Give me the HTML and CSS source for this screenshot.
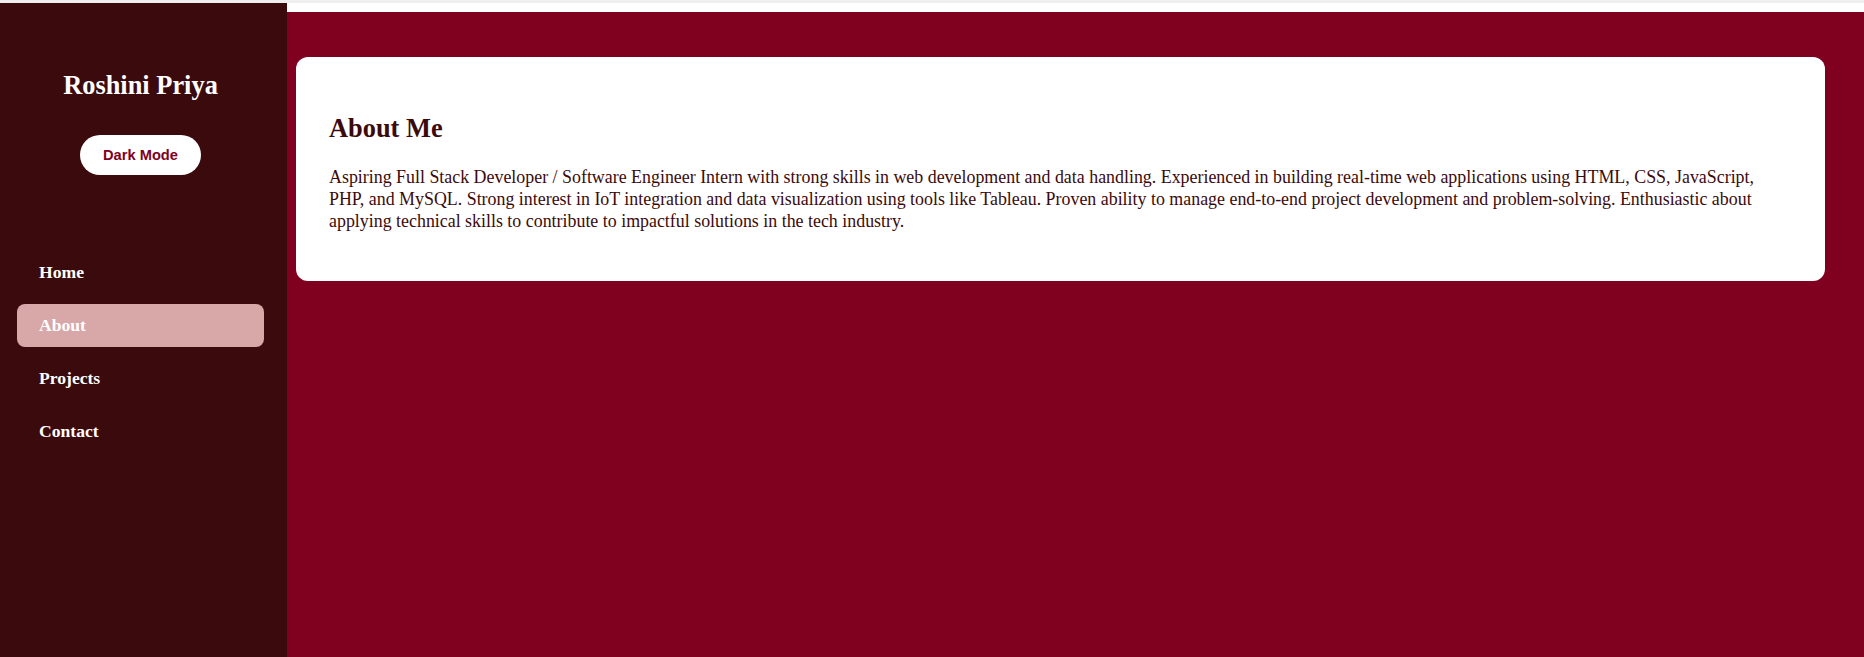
FILE: index.html
```html
<!DOCTYPE html>
<html lang="en">
<head>
<meta charset="utf-8">
<title>Roshini Priya</title>
<link rel="stylesheet" href="styles.css">
</head>
<body>
<div class="topline"></div>
<div class="layout">
  <aside class="sidebar">
    <h1 class="name">Roshini Priya</h1>
    <button class="mode-btn" type="button">Dark Mode</button>
    <nav class="nav">
      <a class="nav-item" href="#home">Home</a>
      <a class="nav-item active" href="#about">About</a>
      <a class="nav-item" href="#projects">Projects</a>
      <a class="nav-item" href="#contact">Contact</a>
    </nav>
  </aside>
  <main class="main">
    <section class="card" id="about">
      <h2 class="card-title">About Me</h2>
      <p class="card-text">Aspiring Full Stack Developer / Software Engineer Intern with strong skills in web development and data handling. Experienced in building real-time web applications using HTML, CSS, JavaScript, PHP, and MySQL. Strong interest in IoT integration and data visualization using tools like Tableau. Proven ability to manage end-to-end project development and problem-solving. Enthusiastic about applying technical skills to contribute to impactful solutions in the tech industry.</p>
    </section>
  </main>
</div>
</body>
</html>
```

FILE: styles.css
```css
html, body {
  margin: 0;
  padding: 0;
  height: 100%;
}

body {
  background: #ffffff;
  font-family: "Liberation Serif", "Times New Roman", serif;
  display: flex;
  flex-direction: column;
  overflow: hidden;
}

.topline {
  height: 3px;
  background: #efefef;
  flex: none;
}

.layout {
  flex: 1;
  display: flex;
  min-height: 0;
}

.sidebar {
  width: 287px;
  flex: none;
  box-sizing: border-box;
  background: #3b0a0c;
  padding: 67.4px 23px 0 17px;
  display: flex;
  flex-direction: column;
  align-items: center;
}

.name {
  margin: 0;
  font-size: 26.4px;
  line-height: 30px;
  font-weight: bold;
  color: #ffffff;
  text-align: center;
}

.mode-btn {
  margin-top: 34.6px;
  height: 40px;
  padding: 0 23.5px;
  border: none;
  border-radius: 20px;
  background: #ffffff;
  color: #800020;
  font-family: "Liberation Sans", Arial, sans-serif;
  font-weight: bold;
  font-size: 14.67px;
  cursor: pointer;
}

.nav {
  margin-top: 76px;
  align-self: stretch;
  display: flex;
  flex-direction: column;
  gap: 9.7px;
}

.nav-item {
  display: block;
  padding: 11.5px 22px;
  line-height: 20px;
  font-size: 17.6px;
  font-weight: bold;
  color: #ffffff;
  text-decoration: none;
  border-radius: 8px;
}

.nav-item.active {
  background: #d8a7a7;
}

.main {
  flex: 1;
  margin-top: 9px;
  background: #800020;
  padding: 45px 39px 0 9px;
  min-width: 0;
}

.card {
  background: #ffffff;
  border-radius: 12px;
  padding: 33px;
  color: #3b0a0c;
}

.card-title {
  margin: 22.8px 0 22.9px;
  font-size: 26.4px;
  line-height: 30px;
  font-weight: bold;
}

.card-text {
  margin: 0 0 16.2px;
  font-size: 17.9px;
  line-height: 22px;
}
```
